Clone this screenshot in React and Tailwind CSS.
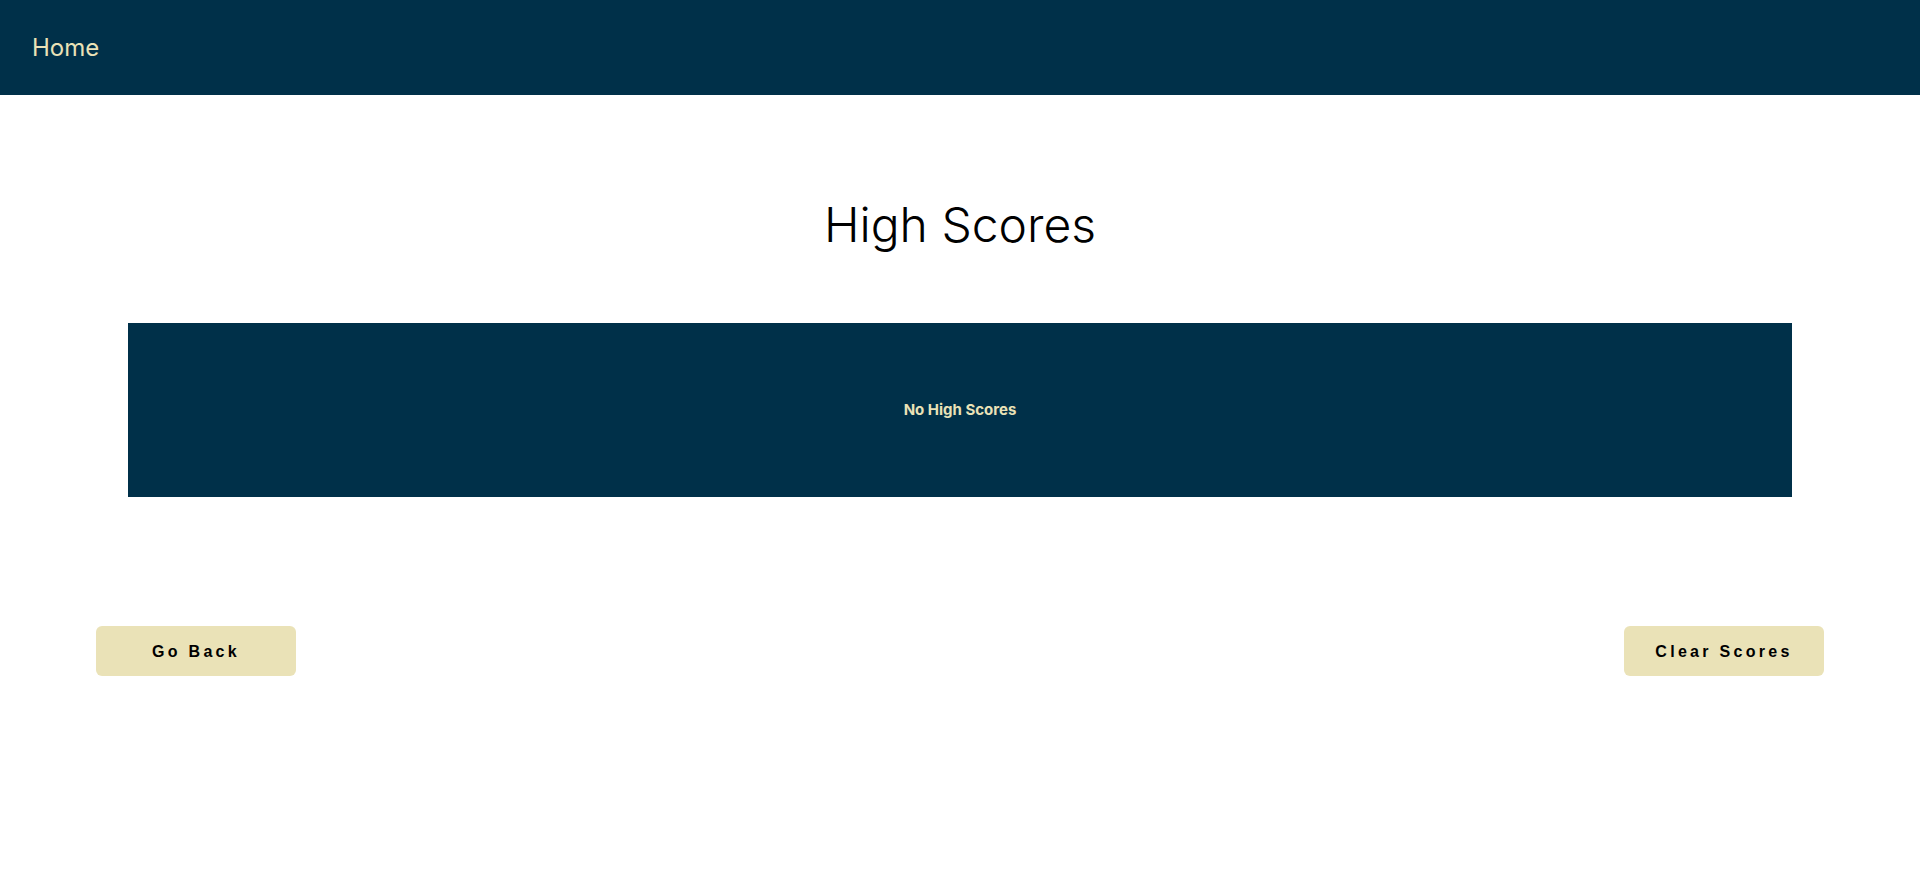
import React from 'react';

const navy = 'bg-[#003049]';

const ActionButton = ({ children }) => (
    <button
        type="button"
        className="w-[200px] h-[50px] rounded-md bg-[#eae2b7] text-black text-[16px] font-semibold tracking-[3.3px] pt-px font-['Liberation_Sans',Arial,sans-serif]"
    >
        {children}
    </button>
);

const App = () => {
    const scores = [];

    return (
        <div className="min-h-[880px] bg-white font-['Inter',sans-serif]">
            <header className={`${navy} h-[95px] flex items-center px-8`}>
                <a href="#" className="text-[24px] text-[#eae2b7] font-normal leading-none">
                    Home
                </a>
            </header>

            <h1 className="mt-[106px] text-center text-[48px] leading-[48px] font-light text-black">
                High Scores
            </h1>

            <div className="px-32 mt-[74px]">
                <div className={`${navy} h-[174px] flex items-center justify-center`}>
                    {scores.length === 0 ? (
                        <p className="text-[15px] font-bold text-[#eae2b7]">No High Scores</p>
                    ) : (
                        <ol>
                            {scores.map((s, i) => (
                                <li key={i}>{s.name} - {s.score}</li>
                            ))}
                        </ol>
                    )}
                </div>
            </div>

            <div className="mt-[129px] px-24 flex justify-between">
                <ActionButton>Go Back</ActionButton>
                <ActionButton>Clear Scores</ActionButton>
            </div>
        </div>
    );
};

export default App;
